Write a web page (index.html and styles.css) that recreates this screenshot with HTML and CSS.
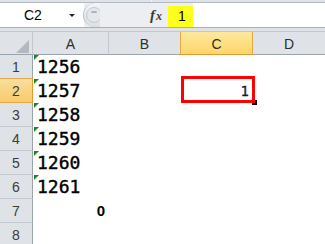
FILE: index.html
```html
<!DOCTYPE html>
<html>
<head>
  <title>Sheet1</title>
  <link rel="stylesheet" href="styles.css">
</head>
<body>
  <div class="strip"><span class="split"></span></div>
  <div class="fbar">
    <div class="namebox">
      <span class="ref">C2</span>
      <span class="arrow"></span>
    </div>
    <div class="expander">
      <svg width="16" height="24" viewBox="0 0 16 24">
        <circle cx="10" cy="12" r="7.5" fill="#e4e7eb" stroke="#c4c8cf"/>
        <rect x="7" y="8" width="6" height="2" rx="1" fill="#aeb3bb"/>
      </svg>
    </div>
    <div class="fxarea"><span class="fx"><i>f</i><i class="fxx">x</i></span></div>
    <div class="fval">1</div>
    <div class="finput"></div>
  </div>
  <div class="gap"></div>

  <!-- grid: row headers + columns A-D -->
  <div class="sheet">
    <div class="hd corner">
      <svg width="33" height="23" viewBox="0 0 33 23"><polygon points="29,8 29,21 16,21" fill="#b3b8c0"/></svg>
    </div>
    <div class="hd col">A</div>
    <div class="hd col">B</div>
    <div class="hd col sel">C</div>
    <div class="hd col last">D</div>

    <div class="hd row">1</div>
    <div class="cell txt flag">1256</div><div class="cell"></div><div class="cell"></div><div class="cell"></div>

    <div class="hd row sel">2</div>
    <div class="cell txt flag">1257</div><div class="cell"></div>
    <div class="cell active"><span class="num1">1</span></div><div class="cell"></div>

    <div class="hd row">3</div>
    <div class="cell txt flag">1258</div><div class="cell"></div><div class="cell"></div><div class="cell"></div>

    <div class="hd row">4</div>
    <div class="cell txt flag">1259</div><div class="cell"></div><div class="cell"></div><div class="cell"></div>

    <div class="hd row">5</div>
    <div class="cell txt flag">1260</div><div class="cell"></div><div class="cell"></div><div class="cell"></div>

    <div class="hd row">6</div>
    <div class="cell txt flag">1261</div><div class="cell"></div><div class="cell"></div><div class="cell"></div>

    <div class="hd row">7</div>
    <div class="cell zero">0</div><div class="cell"></div><div class="cell"></div><div class="cell"></div>

    <div class="hd row">8</div>
    <div class="cell"></div><div class="cell"></div><div class="cell"></div><div class="cell"></div>
  </div>
</body>
</html>
```

FILE: styles.css
```css
body {
  margin: 0;
  width: 325px;
  height: 244px;
  overflow: hidden;
  background-color: #ffffff;
  font-family: "Liberation Sans", Arial, sans-serif;
}

/* formula bar area */
.strip {
  height: 2px;
  background-color: #dfe3e8;
  border-bottom: 1px solid #b4bac3;
  position: relative;
}
.split {
  position: absolute;
  left: 151px;
  top: 0;
  width: 1px;
  height: 2px;
  background-color: #f4f6f8;
}
.fbar {
  display: flex;
  height: 24px;
  border-bottom: 1px solid #a9b0b9;
  background-color: #eceef2;
}
.namebox {
  width: 84px;
  background-color: #ffffff;
  display: flex;
  align-items: center;
  font-size: 14px;
  color: #000000;
}
.ref {
  margin-left: 24px;
  width: 45px;
}
.arrow {
  width: 0;
  height: 0;
  border-left: 3px solid transparent;
  border-right: 3px solid transparent;
  border-top: 3px solid #222222;
  margin-top: 1px;
}
.expander {
  width: 16px;
  display: flex;
  background: linear-gradient(#f4f5f7, #dcdfe4);
  border-left: 1px solid #b9bec6;
  border-radius: 12px 0 0 12px;
  margin-left: -1px;
}
.fxarea {
  width: 68px;
  display: flex;
  justify-content: flex-end;
  align-items: center;
  background-color: #eceef2;
}
.fx {
  font-family: "Liberation Serif", "Times New Roman", serif;
  font-size: 15px;
  font-weight: bold;
  color: #3a3a3a;
  margin-right: 6px;
}
.fxx {
  font-size: 12px;
  margin-left: 1px;
}
.fval {
  width: 25px;
  background-color: #ffff1e;
  font-size: 14px;
  padding-left: 10px;
  box-sizing: border-box;
  margin-top: 3px;
  height: 21px;
  line-height: 20px;
}
.finput {
  flex: 1;
  background-color: #ffffff;
}
.gap {
  height: 3px;
  background-color: #dfe3e8;
}

/* sheet grid */
.sheet {
  display: grid;
  grid-template-columns: 33px 76px 72px 72px 72px;
  grid-template-rows: 24px repeat(8, 24px);
}
.hd {
  box-sizing: border-box;
  background-color: #dfe3e8;
  color: #2d2d2d;
  font-size: 14px;
  display: flex;
  align-items: center;
  justify-content: center;
  border-bottom: 1px solid #c3c8cf;
}
.col {
  border-top: 1px solid #c3c8cf;
  border-right: 1px solid #c3c8cf;
  border-bottom: 1px solid #9ba3ad;
  padding-top: 1px;
}
.col.last {
  border-right: none;
}
.corner {
  border-top: 1px solid #c3c8cf;
  border-right: 1px solid #c3c8cf;
  border-bottom: 1px solid #9ba3ad;
  display: block;
}
.corner svg {
  display: block;
}
.row {
  border-right: 1px solid #9ba3ad;
  color: #3c3c3c;
}
.col.sel {
  background: linear-gradient(#fde99c, #fdd66a);
  border-right: 1px solid #e8a84a;
  border-left: 1px solid #e8a84a;
  border-bottom: 1px solid #e49b2c;
  margin-left: -1px;
}
.row.sel {
  background: linear-gradient(#f9de9c, #f7cb6c);
  border-right: 1px solid #e49b2c;
  border-bottom: 1px solid #e8a84a;
  border-top: 1px solid #e8a84a;
  margin-top: -1px;
}
.cell {
  position: relative;
  line-height: 23px;
  height: 24px;
}
.txt {
  font-family: "DejaVu Sans Mono", monospace;
  font-size: 18px;
  padding-left: 4px;
  color: #000000;
  -webkit-text-stroke: 0.4px #000000;
}
.flag::before {
  content: "";
  position: absolute;
  left: 1px;
  top: 0;
  border-top: 5px solid #1b8a24;
  border-right: 5px solid transparent;
}
.zero {
  font-weight: bold;
  font-size: 15px;
  text-align: right;
  padding-right: 4px;
}
.active {
  text-align: right;
  padding-right: 4px;
}
.num1 {
  font-family: "DejaVu Sans Mono", monospace;
  font-size: 14px;
  color: #0c1a40;
  -webkit-text-stroke: 0.3px #0c1a40;
}
.active::before {
  content: "";
  position: absolute;
  left: 71px;
  top: 21px;
  width: 5px;
  height: 5px;
  background-color: #000000;
}
.active::after {
  content: "";
  position: absolute;
  left: 0;
  top: -3px;
  width: 68px;
  height: 21px;
  border: 3px solid #ff0000;
}
```
